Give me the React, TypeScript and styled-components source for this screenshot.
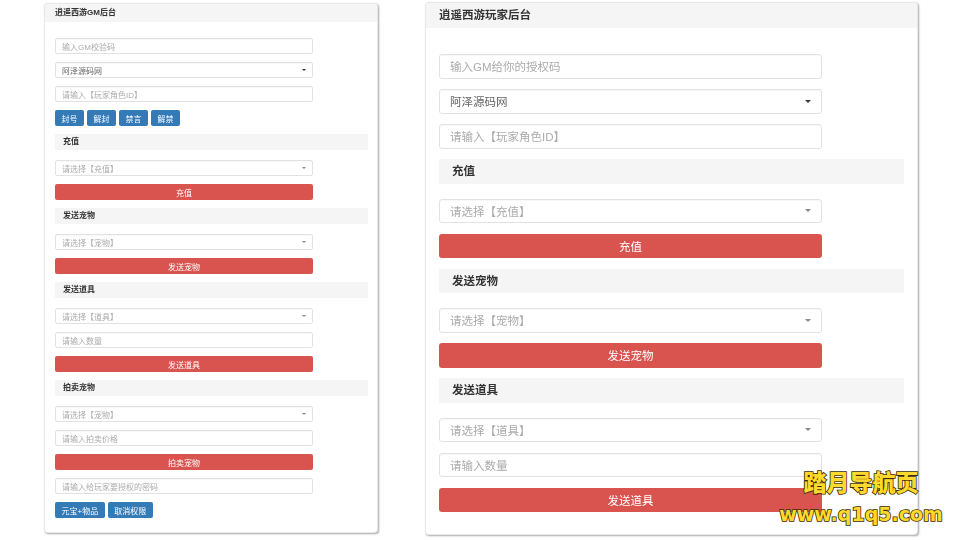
import styled, { createGlobalStyle, css } from 'styled-components';

const GlobalStyle = createGlobalStyle`
  html, body {
    margin: 0;
    padding: 0;
    background: #fff;
  }
  body {
    font-family: "Liberation Sans", "Noto Sans CJK SC", sans-serif;
    overflow: hidden;
  }
`;

const Page = styled.div`
  position: relative;
  width: 960px;
  height: 540px;
  overflow: hidden;
  display: flex;
  align-items: flex-start;
  gap: 49px;
  padding: 4px 0 0 45px;
  box-sizing: border-box;
`;

const smallSizes = css`
  --font: 8px;
  --row: 16px;
  --gap: 8px;
  --extra: 2px;
  --field-pad: 6px;
  --section-pad: 8px;
  --radius: 2px;
  --caret: 2px;
  --field-width: 258px;
  width: 332px;
`;

const bigSizes = css`
  --font: 11.5px;
  --row: 24.5px;
  --gap: 10.5px;
  --extra: 4.5px;
  --field-pad: 10px;
  --section-pad: 13px;
  --radius: 3px;
  --caret: 3px;
  --field-width: 383px;
  width: 491px;
  margin-top: -1px;
`;

const Panel = styled.section<{ $big?: boolean }>`
  ${({ $big }) => ($big ? bigSizes : smallSizes)}
  box-sizing: border-box;
  flex: none;
  background: #fff;
  border-radius: 3px;
  box-shadow: 0 0 0 1px #e8e8e8, 1px 1px 2px 0.5px #a8a8a8;
  filter: blur(0.5px);
  overflow: hidden;
`;

const PanelHeader = styled.h2<{ $big?: boolean }>`
  margin: 0;
  height: ${({ $big }) => ($big ? '25px' : '18px')};
  line-height: ${({ $big }) => ($big ? '25px' : '18px')};
  padding-left: ${({ $big }) => ($big ? '13px' : '10px')};
  background: #f5f5f5;
  color: #333;
  font-size: var(--font);
  font-weight: 700;
`;

const PanelBody = styled.div<{ $big?: boolean }>`
  display: flex;
  flex-direction: column;
  gap: var(--gap);
  padding: ${({ $big }) => ($big ? '26px 13px 22px' : '16px 9px 14px 10px')};
`;

const Field = styled.div<{ $value?: boolean }>`
  box-sizing: border-box;
  width: var(--field-width);
  height: var(--row);
  display: flex;
  align-items: center;
  justify-content: space-between;
  padding: 0 var(--field-pad);
  border: 1px solid #e2e2e2;
  border-radius: var(--radius);
  box-shadow: inset 0 1px 1px rgba(0, 0, 0, 0.03);
  color: ${({ $value }) => ($value ? '#666' : '#ababab')};
  font-size: var(--font);
  white-space: nowrap;
`;

const Caret = styled.i<{ $dark?: boolean }>`
  flex: none;
  width: 0;
  height: 0;
  border-left: var(--caret) solid transparent;
  border-right: var(--caret) solid transparent;
  border-top: var(--caret) solid ${({ $dark }) => ($dark ? '#333' : '#888')};
`;

const SectionTitle = styled.h3`
  margin: 0 0 var(--extra);
  height: var(--row);
  line-height: var(--row);
  padding-left: var(--section-pad);
  background: #f5f5f5;
  color: #333;
  font-size: var(--font);
  font-weight: 700;
`;

const DangerButton = styled.button`
  box-sizing: border-box;
  display: block;
  width: var(--field-width);
  height: var(--row);
  padding: 0;
  border: 0;
  border-radius: var(--radius);
  background: #d9534f;
  color: #fff;
  font: inherit;
  font-size: var(--font);
`;

const ButtonRow = styled.div`
  display: flex;
  gap: 3px;
`;

const BlueButton = styled.button`
  box-sizing: border-box;
  height: var(--row);
  padding: 0 6.5px;
  border: 0;
  border-radius: var(--radius);
  background: #337ab7;
  color: #fff;
  font: inherit;
  font-size: var(--font);
  white-space: nowrap;
`;

const Watermark = styled.div`
  position: absolute;
  left: 778px;
  top: 467px;
  width: 166px;
  display: flex;
  flex-direction: column;
  align-items: center;
  color: #ffd92e;
  font-weight: 900;
  -webkit-text-stroke: 1.6px #3a2c00;
  paint-order: stroke fill;
`;

const WatermarkTitle = styled.div`
  font-family: "Noto Sans CJK SC", sans-serif;
  font-size: 23px;
  line-height: 28px;
  margin-left: 0;
`;

const WatermarkUrl = styled.div`
  font-family: "DejaVu Sans", sans-serif;
  font-size: 19px;
  line-height: 26px;
  margin-top: 6px;
  white-space: nowrap;
`;

function SelectField({ label, dark }: { label: string; dark?: boolean }) {
  return (
    <Field $value={dark}>
      {label}
      <Caret $dark={dark} />
    </Field>
  );
}

export default function App() {
  return (
    <Page>
      <GlobalStyle />
      <Panel>
        <PanelHeader>逍遥西游GM后台</PanelHeader>
        <PanelBody>
          <Field>输入GM校验码</Field>
          <SelectField label="阿泽源码网" dark />
          <Field>请输入【玩家角色ID】</Field>
          <ButtonRow>
            <BlueButton>封号</BlueButton>
            <BlueButton>解封</BlueButton>
            <BlueButton>禁言</BlueButton>
            <BlueButton>解禁</BlueButton>
          </ButtonRow>
          <SectionTitle>充值</SectionTitle>
          <SelectField label="请选择【充值】" />
          <DangerButton>充值</DangerButton>
          <SectionTitle>发送宠物</SectionTitle>
          <SelectField label="请选择【宠物】" />
          <DangerButton>发送宠物</DangerButton>
          <SectionTitle>发送道具</SectionTitle>
          <SelectField label="请选择【道具】" />
          <Field>请输入数量</Field>
          <DangerButton>发送道具</DangerButton>
          <SectionTitle>拍卖宠物</SectionTitle>
          <SelectField label="请选择【宠物】" />
          <Field>请输入拍卖价格</Field>
          <DangerButton>拍卖宠物</DangerButton>
          <Field>请输入给玩家要授权的密码</Field>
          <ButtonRow>
            <BlueButton>元宝+物品</BlueButton>
            <BlueButton>取消权限</BlueButton>
          </ButtonRow>
        </PanelBody>
      </Panel>

      <Panel $big>
        <PanelHeader $big>逍遥西游玩家后台</PanelHeader>
        <PanelBody $big>
          <Field>输入GM给你的授权码</Field>
          <SelectField label="阿泽源码网" dark />
          <Field>请输入【玩家角色ID】</Field>
          <SectionTitle>充值</SectionTitle>
          <SelectField label="请选择【充值】" />
          <DangerButton>充值</DangerButton>
          <SectionTitle>发送宠物</SectionTitle>
          <SelectField label="请选择【宠物】" />
          <DangerButton>发送宠物</DangerButton>
          <SectionTitle>发送道具</SectionTitle>
          <SelectField label="请选择【道具】" />
          <Field>请输入数量</Field>
          <DangerButton>发送道具</DangerButton>
        </PanelBody>
      </Panel>

      <Watermark>
        <WatermarkTitle>踏月导航页</WatermarkTitle>
        <WatermarkUrl>www.q1q5.com</WatermarkUrl>
      </Watermark>
    </Page>
  );
}
